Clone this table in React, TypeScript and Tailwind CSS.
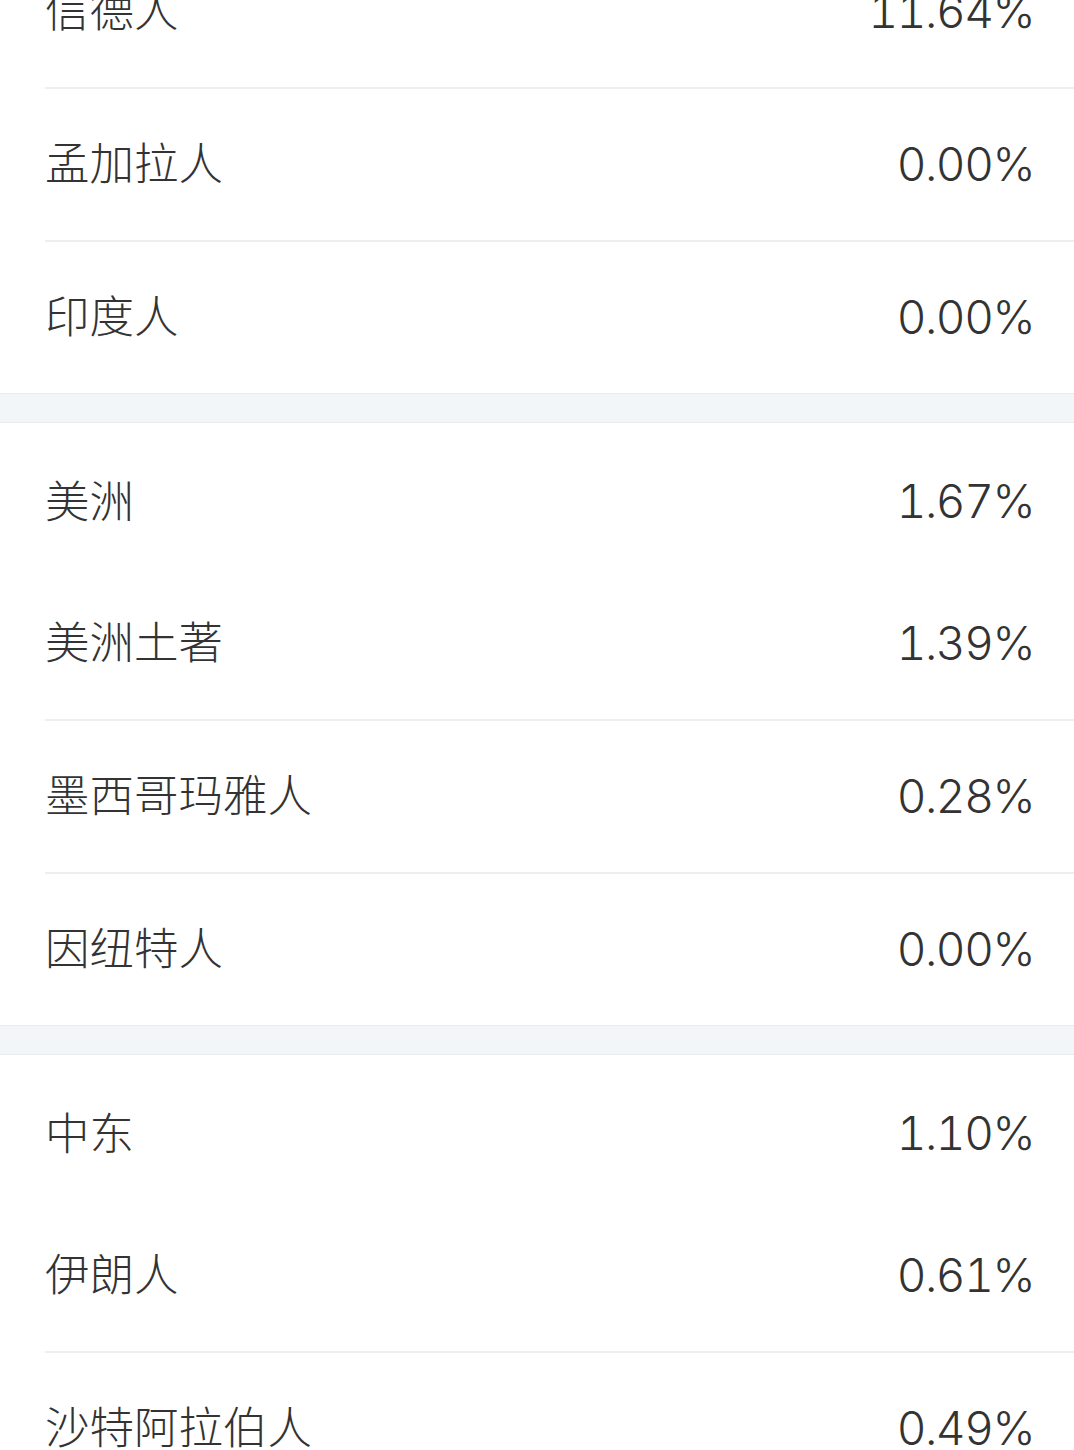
import React from "react";

type Row = { name: string; value: string; header?: boolean };

const sections: Row[][] = [
  [
    { name: "信德人", value: "11.64%" },
    { name: "孟加拉人", value: "0.00%" },
    { name: "印度人", value: "0.00%" },
  ],
  [
    { name: "美洲", value: "1.67%", header: true },
    { name: "美洲土著", value: "1.39%" },
    { name: "墨西哥玛雅人", value: "0.28%" },
    { name: "因纽特人", value: "0.00%" },
  ],
  [
    { name: "中东", value: "1.10%", header: true },
    { name: "伊朗人", value: "0.61%" },
    { name: "沙特阿拉伯人", value: "0.49%" },
  ],
];

function Line({ row, divider }: { row: Row; divider: boolean }) {
  return (
    <div className="pl-[45px]">
      <div
        className={
          "flex items-center justify-between pr-[40px] " +
          (row.header ? "h-[145px] pt-[7px]" : divider ? "h-[153px] pb-[6px] border-b-2 border-[#eceef1]" : "h-[151px] pb-[6px]")
        }
      >
        <span className="text-[44.5px] leading-none font-light text-[#333333]">{row.name}</span>
        <span
          className="pt-[4px] text-[46px] leading-none font-light tabular-nums tracking-[-1.5px] text-[#333333]"
          style={{ fontFamily: 'Inter, "Noto Sans CJK SC", sans-serif' }}
        >
          {row.value}
        </span>
      </div>
    </div>
  );
}

export default function App() {
  return (
    <div
      className="w-[1074px] h-[1450px] overflow-hidden bg-white"
      style={{ fontFamily: '"Noto Sans CJK SC", "Noto Sans", sans-serif' }}
    >
      <div className="-mt-[64px]">
        {sections.map((sec, si) => (
          <div key={si}>
            {si > 0 && (
              <div className="h-[30px] bg-[#f3f6f9] border-y border-[#e9ebee]" />
            )}
            {sec.map((row, ri) => {
              const divider = !row.header && ri < sec.length - 1;
              return <Line key={ri} row={row} divider={divider} />;
            })}
          </div>
        ))}
      </div>
    </div>
  );
}
